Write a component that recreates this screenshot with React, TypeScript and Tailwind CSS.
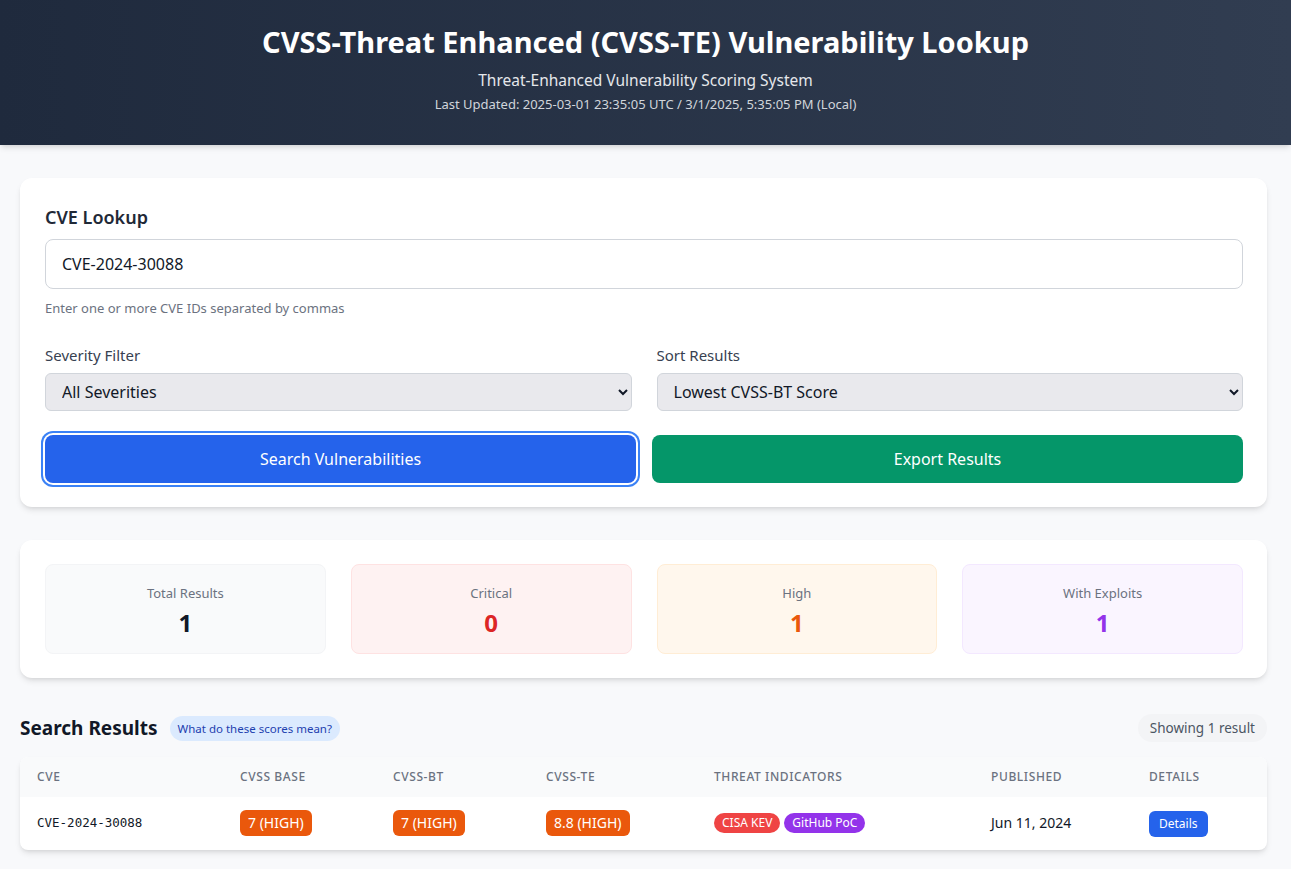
import React from 'react';

const stats = [
  { label: 'Total Results', value: '1', box: 'bg-[#f9fafb] border-[#f3f4f6]', num: 'text-[#111827]' },
  { label: 'Critical', value: '0', box: 'bg-[#fef2f2] border-[#fee2e2]', num: 'text-[#dc2626]' },
  { label: 'High', value: '1', box: 'bg-[#fff7ed] border-[#ffedd5]', num: 'text-[#ea580c]' },
  { label: 'With Exploits', value: '1', box: 'bg-[#faf5ff] border-[#f3e8ff]', num: 'text-[#9333ea]' },
];

function ScoreBadge({ text }: { text: string }) {
  return (
    <span className="inline-block bg-[#ea580c] text-white text-sm rounded-md px-2 py-[3px]">{text}</span>
  );
}

export default function App() {
  return (
    <div className="min-h-screen bg-[#f8f9fb] text-[#1f2937] font-['Noto_Sans',sans-serif]">
      {/* Header */}
      <header className="bg-gradient-to-r from-[#1f2a3d] to-[#313d51] text-white text-center pt-[22px] pb-[31px] shadow-md">
        <h1 className="text-[29px] font-bold leading-10">CVSS-Threat Enhanced (CVSS-TE) Vulnerability Lookup</h1>
        <p className="text-[15.5px] text-[#e5e7eb] mt-[6px] leading-6">Threat-Enhanced Vulnerability Scoring System</p>
        <p className="text-[13px] text-[#d1d5db] mt-[2px] leading-5">Last Updated: 2025-03-01 23:35:05 UTC / 3/1/2025, 5:35:05 PM (Local)</p>
      </header>

      <main className="pl-5 pr-6 pt-[33px] pb-4">
        {/* Lookup card */}
        <section className="bg-white rounded-xl shadow-md py-6 pl-[25px] pr-6 pt-[25px]">
          <h2 className="text-lg font-semibold text-[#1f2937] leading-7">CVE Lookup</h2>
          <input
            readOnly
            value="CVE-2024-30088"
            className="mt-[8px] w-full h-[50px] border border-[#d1d5db] rounded-lg px-4 text-base text-[#111827] outline-none"
          />
          <p className="text-[13px] text-[#6b7280] mt-[10px]">Enter one or more CVE IDs separated by commas</p>

          <div className="grid grid-cols-2 gap-[25px] mt-[25px]">
            <div>
              <label className="block text-[15px] text-[#374151] mb-[7px]">Severity Filter</label>
              <select className="w-full h-[38px] bg-[#e9e9ed] border border-[#d1d5db] rounded-md px-3 text-base text-[#111827]">
                <option>All Severities</option>
              </select>
            </div>
            <div>
              <label className="block text-[15px] text-[#374151] mb-[7px]">Sort Results</label>
              <select className="w-full h-[38px] bg-[#e9e9ed] border border-[#d1d5db] rounded-md px-3 text-base text-[#111827]">
                <option>Lowest CVSS-BT Score</option>
              </select>
            </div>
          </div>

          <div className="grid grid-cols-2 gap-4 mt-6">
            <button className="h-12 rounded-lg bg-[#2563eb] text-white text-base ring-2 ring-offset-2 ring-[#3b82f6] ring-offset-white">
              Search Vulnerabilities
            </button>
            <button className="h-12 rounded-lg bg-[#059669] text-white text-base">Export Results</button>
          </div>
        </section>

        {/* Stats card */}
        <section className="bg-white rounded-xl shadow-md py-6 pl-[25px] pr-6 mt-[33px]">
          <div className="grid grid-cols-4 gap-[25px]">
            {stats.map(s => (
              <div key={s.label} className={`h-[90px] rounded-lg border text-center pt-[18px] ${s.box}`}>
                <div className="text-[13px] text-[#6b7280] leading-5">{s.label}</div>
                <div className={`text-2xl font-bold mt-[4px] leading-8 ${s.num}`}>{s.value}</div>
              </div>
            ))}
          </div>
        </section>

        {/* Results */}
        <div className="flex items-center justify-between mt-[36px]">
          <div className="flex items-center gap-3">
            <h2 className="text-[19px] font-bold text-[#111827]">Search Results</h2>
            <span className="bg-[#dbeafe] text-[#1e40af] text-[11.5px] rounded-full px-[8px] py-[4px]">What do these scores mean?</span>
          </div>
          <span className="bg-[#f3f4f6] text-[#4b5563] text-[13.5px] rounded-full px-3 py-[4px]">Showing 1 result</span>
        </div>

        <div className="mt-[14px] bg-white rounded-lg shadow-md overflow-hidden">
          <table className="w-full text-left">
            <thead className="bg-[#f9fafb]">
              <tr className="text-xs uppercase tracking-wider text-[#6b7280] h-10">
                <th className="font-medium pl-[17px] w-[220px]">CVE</th>
                <th className="font-medium w-[153px]">CVSS Base</th>
                <th className="font-medium w-[153px]">CVSS-BT</th>
                <th className="font-medium w-[168px]">CVSS-TE</th>
                <th className="font-medium w-[277px]">Threat Indicators</th>
                <th className="font-medium w-[158px]">Published</th>
                <th className="font-medium">Details</th>
              </tr>
            </thead>
            <tbody>
              <tr className="h-[53px]">
                <td className="pl-[17px] font-['DejaVu_Sans_Mono',monospace] text-[12.5px] text-[#111827]">CVE-2024-30088</td>
                <td><ScoreBadge text="7 (HIGH)" /></td>
                <td><ScoreBadge text="7 (HIGH)" /></td>
                <td><ScoreBadge text="8.8 (HIGH)" /></td>
                <td>
                  <div className="flex gap-1">
                    <span className="bg-[#ef4444] text-white text-xs rounded-full px-2 py-[2px]">CISA KEV</span>
                    <span className="bg-[#9333ea] text-white text-xs rounded-full px-2 py-[2px]">GitHub PoC</span>
                  </div>
                </td>
                <td className="text-sm text-[#111827]">Jun 11, 2024</td>
                <td>
                  <button className="bg-[#2563eb] text-white text-xs rounded-md px-[10px] py-[5px]">Details</button>
                </td>
              </tr>
            </tbody>
          </table>
        </div>
      </main>
    </div>
  );
}
